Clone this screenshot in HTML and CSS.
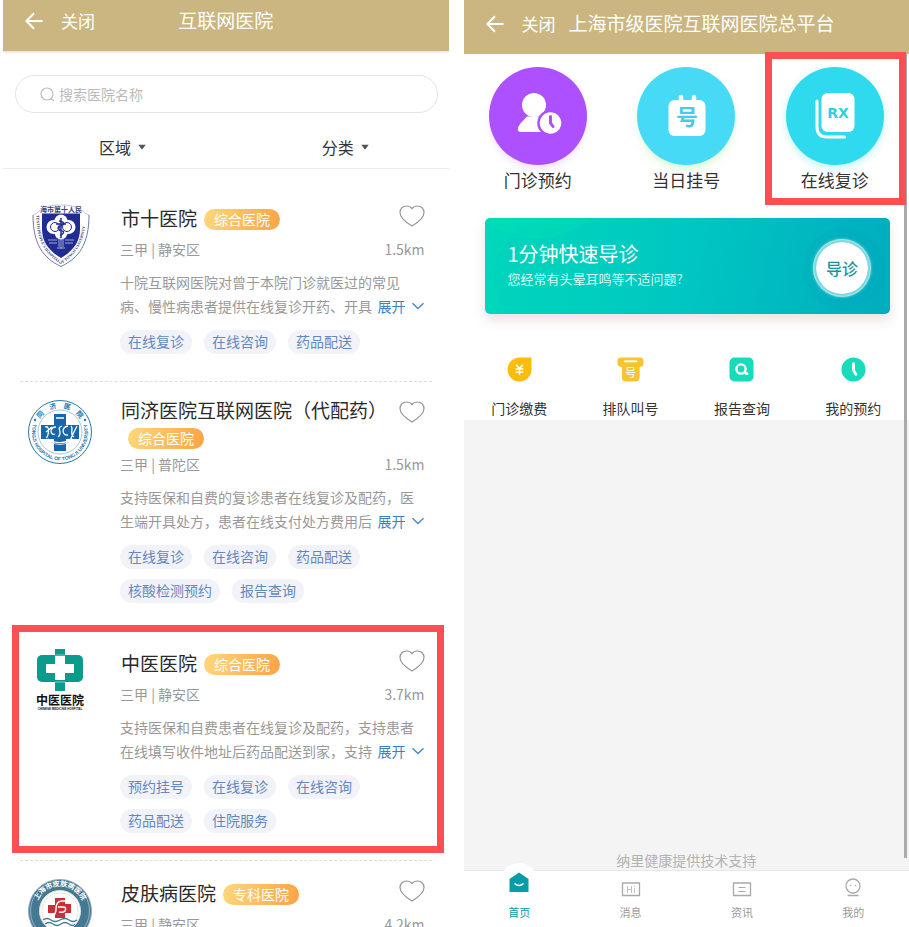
FILE: index.html
```html
<!DOCTYPE html>
<html lang="zh-CN">
<head>
    <meta charset="UTF-8" />
    <meta name="viewport" content="width=device-width, initial-scale=1" />
    <title>互联网医院</title>
    <link rel="stylesheet" href="styles.css">
</head>
<body>
<!-- shared icons -->
<svg class="defs" aria-hidden="true">
    <symbol id="i-back" viewBox="0 0 18 18"><path d="M17.5 9H1.5M9 1.2 1.3 9 9 16.8" fill="none" stroke="#fff" stroke-width="2"/></symbol>
    <symbol id="i-heart" viewBox="0 0 26 22"><path d="M13 21C10.500 19.500 1 13.500 1 7.500C1 3.500 4 1 7.200 1C9.800 1 12 2.200 13 3.600C14 2.200 16.200 1 18.800 1C22 1 25 3.500 25 7.500C25 13.500 15.500 19.500 13 21Z" fill="none" stroke="#979797" stroke-width="1.200"/></symbol>
    <symbol id="i-down" viewBox="0 0 14 8"><path d="M1.500 1.200 7 6.500 12.500 1.200" fill="none" stroke="#4a88cc" stroke-width="1.400"/></symbol>
    <symbol id="i-caret" viewBox="0 0 8 6"><path d="M.3.800H7.700L4.600 5Q4 5.600 3.400 5Z" fill="#555"/></symbol>
</svg>

<div class="screens">
    <main class="screen">
        <header class="bar">
            <div class="bar-left">
                <button type="button" aria-label="返回"><svg width="18" height="18"><use href="#i-back"/></svg></button>
                <button type="button">关闭</button>
            </div>
            <h1>互联网医院</h1>
        </header>

        <label class="search">
            <svg width="15" height="15" viewBox="0 0 15 15" fill="none" stroke="#bdbdbd" stroke-width="1.200"><circle cx="7" cy="7" r="6"/><path d="M11 11.500 14 14"/></svg>
            <input type="search" aria-label="搜索医院名称" placeholder="搜索医院名称" />
        </label>

        <div class="filters">
            <label><select aria-label="区域"><option>区域</option></select><svg width="8" height="6"><use href="#i-caret"/></svg></label>
            <label><select aria-label="分类"><option>分类</option></select><svg width="8" height="6"><use href="#i-caret"/></svg></label>
        </div>

        <section class="list">
            <article class="hospital">
                <svg class="logo" viewBox="0 0 64 64" role="img" aria-label="市十医院">
                    <path id="shield-edge" d="M8.500 11C8 36 17 51 33 60C49 51 58 36 57.500 11" fill="none"/>
                    <path d="M5 11C5 40 15 54 33 62.500C51 54 61 40 61 11" fill="none" stroke="#4b5590" stroke-width=".800"/>
                    <path d="M5 11Q9 10 11 7C19 2 24 1 33 1S47 2 55 7Q57 10 61 11" fill="none" stroke="#8f96bb" stroke-width=".500"/>
                    <text x="33" y="8" text-anchor="middle" class="shield-cn">海市第十人民</text>
                    <text class="shield-en"><textPath href="#shield-edge">TENTH PEOPLE'S HOSPITAL OF TONGJI UNIVERSITY</textPath></text>
                    <path d="M14 9.500H52V25C52 38 45 47 33 54C21 47 14 38 14 25Z" fill="#202c91"/>
                    <g fill="#fff"><circle cx="33" cy="17" r="6.500"/><circle cx="33" cy="29" r="6.500"/><circle cx="25.500" cy="23" r="7"/><circle cx="40.500" cy="23" r="7"/></g>
                    <g fill="none" stroke="#202c91"><circle cx="27" cy="23" r="4.500"/><circle cx="39" cy="23" r="4.500"/></g>
                    <path d="M33 14V34M28 20H38M31 17C38 18 36 21 32 22S31 27 34 27S35 31 32 31" fill="none" stroke="#202c91" stroke-width="1.500"/>
                    <path d="M20 36H29M37 36H46M21 39H29M37 39H45M31 33V43M33 34V45M35 33V43M29 44H37" stroke="#bcc4ea" stroke-width=".800"/>
                </svg>
                <div class="info">
                    <div class="head">
                        <h2>市十医院<span class="badge">综合医院</span></h2>
                        <button type="button" aria-label="收藏"><svg width="26" height="22"><use href="#i-heart"/></svg></button>
                    </div>
                    <p class="meta"><span>三甲 | 静安区</span><span>1.5km</span></p>
                    <p class="desc">十院互联网医院对曾于本院门诊就医过的常见病、慢性病患者提供在线复诊开药、开具<button type="button">展开<svg width="14" height="8"><use href="#i-down"/></svg></button></p>
                    <ul class="tags"><li>在线复诊</li><li>在线咨询</li><li>药品配送</li></ul>
                </div>
            </article>

            <article class="hospital">
                <svg class="logo" viewBox="0 0 64 64" role="img" aria-label="同济医院">
                    <path id="tj-top" d="M8 32A24 24 0 0 1 56 32" fill="none"/>
                    <path id="tj-bottom" d="M5.300 24A28 28 0 1 0 58.700 24" fill="none"/>
                    <circle cx="32" cy="32" r="31.500" fill="#fff" stroke="#2778a8"/>
                    <circle cx="32" cy="32" r="22" fill="none" stroke="#6d9fb9" stroke-width=".600"/>
                    <text class="tj-cn"><textPath href="#tj-top" startOffset="50%" text-anchor="middle">同&#160;&#160;&#160;&#160;济&#160;&#160;&#160;&#160;医&#160;&#160;&#160;&#160;院</textPath></text>
                    <text class="tj-en"><textPath href="#tj-bottom" startOffset="50%" text-anchor="middle">TONGJI HOSPITAL OF TONGJI UNIVERSITY</textPath></text>
                    <circle cx="7" cy="20" r="1.200" fill="#2778a8"/><circle cx="57" cy="20" r="1.200" fill="#2778a8"/>
                    <path d="M26 14H38V25H51V39H38V51H26V39H13V25H26Z" fill="#1767aa"/>
                    <path d="M28 18H36M17 27C23 25 20 37 18 38M18 32L24 27M28 27C21 27 22 36 27 34M34 26C27 28 36 32 30 37M40 26C33 27 34 36 40 35M43 26C46 29 41 34 46 37M49 26L43 38M20 39C27 44 38 44 44 38" fill="none" stroke="#fff" stroke-width="1.300"/>
                    <path d="M23 42Q32 47 41 42" fill="none" stroke="#c5dced"/>
                </svg>
                <div class="info">
                    <div class="head">
                        <h2>同济医院互联网医院（代配药）<span class="badge">综合医院</span></h2>
                        <button type="button" aria-label="收藏"><svg width="26" height="22"><use href="#i-heart"/></svg></button>
                    </div>
                    <p class="meta"><span>三甲 | 普陀区</span><span>1.5km</span></p>
                    <p class="desc">支持医保和自费的复诊患者在线复诊及配药，医生端开具处方，患者在线支付处方费用后<button type="button">展开<svg width="14" height="8"><use href="#i-down"/></svg></button></p>
                    <ul class="tags"><li>在线复诊</li><li>在线咨询</li><li>药品配送</li><li>核酸检测预约</li><li>报告查询</li></ul>
                </div>
            </article>

            <article class="hospital marked">
                <svg class="logo" viewBox="0 0 64 64" role="img" aria-label="中医医院">
                    <rect x="9" y="6" width="46" height="27" rx="5" fill="#0a9b8c"/>
                    <path d="M27 7H37V15H46V24H37V31H27V24H18V15H27Z" fill="#fff"/>
                    <path d="M27 0H37V7H27ZM27 31H37V42H27Z" fill="#0a9b8c"/>
                    <path d="M27 6H37M27 33H37" stroke="#d6f0ed" stroke-width=".600"/>
                    <text x="32" y="56" text-anchor="middle" class="tcm-cn">中医医院</text>
                    <text x="32" y="61" text-anchor="middle" class="tcm-en">CHINESE MEDICINE HOSPITAL</text>
                </svg>
                <div class="info">
                    <div class="head">
                        <h2>中医医院<span class="badge">综合医院</span></h2>
                        <button type="button" aria-label="收藏"><svg width="26" height="22"><use href="#i-heart"/></svg></button>
                    </div>
                    <p class="meta"><span>三甲 | 静安区</span><span>3.7km</span></p>
                    <p class="desc">支持医保和自费患者在线复诊及配药，支持患者在线填写收件地址后药品配送到家，支持<button type="button">展开<svg width="14" height="8"><use href="#i-down"/></svg></button></p>
                    <ul class="tags"><li>预约挂号</li><li>在线复诊</li><li>在线咨询</li><li>药品配送</li><li>住院服务</li></ul>
                </div>
            </article>

            <article class="hospital">
                <svg class="logo" viewBox="0 0 64 64" role="img" aria-label="皮肤病医院">
                    <path id="skin-top" d="M8.500 36A24 24 0 1 1 55.500 36" fill="none"/>
                    <circle cx="32" cy="32" r="31.500" fill="#447991" stroke="#8eabb9"/>
                    <circle cx="32" cy="32" r="29.500" fill="none" stroke="#c9d8df" stroke-width=".600"/>
                    <circle cx="32" cy="32" r="20.500" fill="#fff" stroke="#dbe6ea"/>
                    <circle cx="32" cy="32" r="18" fill="none" stroke="#c6ba93" stroke-width=".800" stroke-dasharray="1 1"/>
                    <text class="skin-cn"><textPath href="#skin-top" startOffset="50%" text-anchor="middle">上海市皮肤病医院</textPath></text>
                    <path d="M27 19H37V25H43V34H37V39H27V34H20V26H27Z" fill="#c92f34"/>
                    <path d="M40 22H34Q28 22 28 30Q28 37 22 38M30 28H35Q39 28 37 32Q35 34 31 33" fill="none" stroke="#fff" stroke-width="1.500"/>
                    <path d="M15 41Q19 38 23 41T32 41T41 41T49 41M17 45Q21 42 25 45T33 45T41 45T47 45" fill="none" stroke="#447991" stroke-width="1.300"/>
                </svg>
                <div class="info">
                    <div class="head">
                        <h2>皮肤病医院<span class="badge">专科医院</span></h2>
                        <button type="button" aria-label="收藏"><svg width="26" height="22"><use href="#i-heart"/></svg></button>
                    </div>
                    <p class="meta"><span>三甲 | 静安区</span><span>4.2km</span></p>
                </div>
            </article>
        </section>
    </main>

    <main class="screen platform">
        <header class="bar bar-tall">
            <div class="bar-left">
                <button type="button" aria-label="返回"><svg width="18" height="18"><use href="#i-back"/></svg></button>
                <button type="button">关闭</button>
            </div>
            <h1>上海市级医院互联网医院总平台</h1>
        </header>

        <div class="content">
            <div class="scrollbar"></div>
            <nav class="services">
                <a href="#">
                    <svg class="purple" viewBox="0 0 98 98">
                        <circle cx="45" cy="38" r="12" fill="#fff"/>
                        <path d="M38 49.500H52L56 65H32Q28 65 29 61C30 57 34 54 38 49.500Z" fill="#fff"/>
                        <circle cx="61.500" cy="56" r="12" fill="#fff" stroke="#ad50ff" stroke-width="2.500"/>
                        <path d="M61.500 49.500V56L64 59.500" fill="none" stroke="#ad50ff" stroke-width="3" stroke-linecap="round"/>
                    </svg>
                    门诊预约
                </a>
                <a href="#">
                    <svg class="blue" viewBox="0 0 98 98">
                        <rect x="31.500" y="33" width="37" height="36" rx="6" fill="#fff"/>
                        <path d="M44 30V35M57 30V35" stroke="#fff" stroke-width="4.500" stroke-linecap="round"/>
                        <text x="50" y="58" text-anchor="middle" class="hao">号</text>
                    </svg>
                    当日挂号
                </a>
                <a href="#" class="marked">
                    <svg class="cyan" viewBox="0 0 98 98">
                        <rect x="35.500" y="26" width="33" height="39" rx="6" fill="#fff"/>
                        <path d="M31 34V60Q31 70 41 70H58.500" fill="none" stroke="#fff" stroke-width="3" stroke-linecap="round"/>
                        <text x="52" y="51" text-anchor="middle" class="rx">RX</text>
                    </svg>
                    在线复诊
                </a>
            </nav>

            <section class="banner">
                <div>
                    <h2>1分钟快速导诊</h2>
                    <p>您经常有头晕耳鸣等不适问题?</p>
                </div>
                <button type="button">导诊</button>
            </section>

            <nav class="quick">
                <a href="#">
                    <svg viewBox="0 0 26 26"><path d="M13 .500H25.500V13A12.500 12.500 0 1 1 13 .500Z" fill="#fbbd0c"/><path d="M9.500 8 13 12 16.500 8M13 12V18.500M9 12.500H17M9 15.500H17" fill="none" stroke="#fff" stroke-width="1.500"/></svg>
                    门诊缴费
                </a>
                <a href="#">
                    <svg viewBox="0 0 26 26"><path d="M3 .500H23Q26.500.500 26.500 4V7Q26.500 10 22.500 10.500V21Q22.500 25.500 18 25.500H8.500Q4 25.500 4 21V10.500Q-.500 10-.500 7V4Q-.500.500 3 .500Z" fill="#fac431"/><path d="M6.500 4.500H20" stroke="#fff" stroke-width="2"/><text x="13" y="21" text-anchor="middle" class="queue">号</text></svg>
                    排队叫号
                </a>
                <a href="#">
                    <svg viewBox="0 0 26 26"><rect x=".500" y=".500" width="25" height="25" rx="5" fill="#16dcbc"/><circle cx="12.500" cy="12.500" r="4.800" fill="none" stroke="#fff" stroke-width="2.500"/><path d="M16 15.500Q17 17.500 20 17.500" fill="none" stroke="#fff" stroke-width="2.500"/></svg>
                    报告查询
                </a>
                <a href="#">
                    <svg viewBox="0 0 26 26"><circle cx="13" cy="13" r="12.500" fill="#16dcbc"/><path d="M13 7V12Q13 15.500 15.500 18" fill="none" stroke="#fff" stroke-width="3" stroke-linecap="round"/></svg>
                    我的预约
                </a>
            </nav>

            <footer>纳里健康提供技术支持</footer>
        </div>

        <nav class="tabs">
            <a href="#" class="active">
                <svg viewBox="0 0 24 24"><path d="M12 1.500 21.500 8V21H2.500V8Z" fill="#079ca8"/><path d="M7.500 12.500Q12 16.500 16.500 12.500" fill="none" stroke="#fff" stroke-width="1.500"/></svg>
                首页
            </a>
            <a href="#">
                <svg viewBox="0 0 24 24"><path d="M3.500 12H20.500V24.500H3.500Z" fill="none" stroke="#a9a9a9" stroke-width="1.300"/><path d="M8.500 15V22M8.500 18.500H12.500M12.500 15V22M15.500 17V22M15.500 14.500V15.800" stroke="#bbb" stroke-width=".900"/></svg>
                消息
            </a>
            <a href="#">
                <svg viewBox="0 0 24 24"><path d="M3.500 12H20.500V24.500H3.500Z" fill="none" stroke="#a9a9a9" stroke-width="1.300"/><path d="M8.500 16.500H15.500M8.500 20.500H15.500" stroke="#aaa"/></svg>
                资讯
            </a>
            <a href="#">
                <svg viewBox="0 0 24 24"><circle cx="12" cy="15" r="7" fill="none" stroke="#a9a9a9" stroke-width="1.300"/><path d="M6.500 24.500H17.500" stroke="#a9a9a9" stroke-width="1.500"/><circle cx="9.500" cy="14.500" r=".800" fill="#aaa"/><circle cx="14.500" cy="14.500" r=".800" fill="#aaa"/></svg>
                我的
            </a>
        </nav>
    </main>
</div>
</body>
</html>
```
FILE: styles.css
```css
* {
    margin: 0;
    padding: 0;
    box-sizing: border-box;
}
body {
    background: #fff;
    color: #333;
    font-family: "Noto Sans CJK SC", sans-serif;
    font-size: 14px;
    line-height: 20px;
}
button, input, select {
    font: inherit;
    color: inherit;
    background: none;
    border: 0;
    outline: 0;
}
button {
    cursor: pointer;
    white-space: nowrap;
}
a {
    color: inherit;
    text-decoration: none;
}
svg {
    display: block;
    flex: none;
    overflow: visible;
}
.defs {
    position: absolute;
    width: 0;
    height: 0;
}

.screens {
    display: grid;
    grid-template-columns: 1fr 1fr;
    gap: 15px;
    height: 100vh;
    padding-left: 3px;
    overflow: hidden;
}
.screen {
    min-width: 0;
    overflow: hidden;
}

/* top bar */
.bar {
    display: grid;
    grid-template-columns: 1fr auto 1fr;
    align-items: center;
    flex: none;
    height: 51px;
    padding-bottom: 10px;
    background: #cbb681;
    color: #fff;
    box-shadow: 0 1px 3px rgba(160, 120, 80, 0.3);
}
.bar-tall {
    height: 54px;
    padding-bottom: 6px;
}
.bar h1 {
    padding-bottom: 2px;
    font-size: 19px;
    font-weight: normal;
    white-space: nowrap;
}
.bar-left {
    display: flex;
    align-items: center;
    gap: 18px;
    padding: 0 13px 0 22px;
    font-size: 17px;
}

/* search and filters */
.search {
    display: flex;
    align-items: center;
    gap: 4px;
    height: 38px;
    margin: 24px 11px 0 12px;
    padding: 0 24px;
    border: 1px solid #e4e4e4;
    border-radius: 19px;
}
.search input {
    flex: 1;
    min-width: 0;
}
.search input::placeholder {
    color: #bbb;
}
.filters {
    display: grid;
    grid-template-columns: 1fr 1fr;
    padding: 22px 0 9px;
    border-bottom: 1px solid #ececec;
    font-size: 16px;
}
.filters label {
    display: flex;
    align-items: center;
    justify-content: center;
    gap: 6px;
    padding-left: 16px;
}
.filters select {
    appearance: none;
    height: 24px;
}

/* hospital list */
.list {
    padding: 16px 17px 0;
}
.hospital {
    position: relative;
    display: flex;
    gap: 28px;
    padding: 0 7px 27px 8px;
}
.hospital + .hospital::before {
    content: "";
    position: absolute;
    top: 0;
    left: 0;
    right: 0;
    border-top: 1px dashed #ddd;
}
.logo {
    width: 64px;
    height: 64px;
    margin-top: 19px;
}
.info {
    flex: 1;
    min-width: 0;
    padding-top: 15px;
}
.head {
    display: flex;
    align-items: center;
    justify-content: space-between;
    min-height: 35px;
}
.head h2 {
    padding-left: 1px;
    font-size: 19px;
    font-weight: normal;
    line-height: 27px;
    color: #2a2a2a;
}
.head button {
    align-self: flex-start;
    padding-top: 5px;
}
.badge {
    display: inline-block;
    height: 21px;
    margin-left: 7px;
    padding: 0 10px;
    border-radius: 11px;
    background: linear-gradient(100deg, #fdd77c, #fba445);
    color: #fff;
    font-size: 14px;
    line-height: 20px;
    vertical-align: 1px;
}
.meta {
    display: flex;
    justify-content: space-between;
    margin-top: 4px;
    color: #999;
}
.desc {
    margin-top: 11px;
    color: #999;
    line-height: 24px;
}
.desc button {
    float: right;
    display: flex;
    align-items: center;
    gap: 5px;
    color: #3f7fc6;
}
.tags {
    display: flex;
    flex-wrap: wrap;
    gap: 10px 12px;
    margin-top: 12px;
    list-style: none;
}
.tags li {
    height: 24px;
    padding: 0 8px;
    border-radius: 12px;
    background: #f1f3f9;
    color: #6488bd;
    line-height: 23px;
}

/* red highlight frames */
.marked {
    position: relative;
}
.marked::after {
    content: "";
    position: absolute;
    border: 7px solid #fc4f53;
    pointer-events: none;
}
.hospital.marked::after {
    top: -5px;
    right: -12px;
    bottom: 7px;
    left: -8px;
}
.services .marked::after {
    top: -15px;
    right: 3px;
    bottom: -13px;
    left: 4px;
}

/* lettering in the logos */
.shield-cn {
    font-size: 7px;
    font-weight: bold;
    fill: #3a4377;
}
.shield-en {
    font-family: "Liberation Serif", serif;
    font-size: 4px;
    font-weight: bold;
    fill: #3a4377;
}
.tj-cn {
    font-size: 7px;
    font-weight: bold;
    fill: #2778a8;
}
.tj-en {
    font-family: "Liberation Sans", sans-serif;
    font-size: 5px;
    font-weight: bold;
    fill: #2778a8;
}
.tcm-cn {
    font-size: 12px;
    font-weight: bold;
    fill: #111;
}
.tcm-en {
    font-family: "Liberation Sans", sans-serif;
    font-size: 3px;
    font-weight: bold;
    fill: #111;
}
.skin-cn {
    font-size: 7px;
    font-weight: bold;
    fill: #fff;
}

/* platform screen */
.platform {
    display: flex;
    flex-direction: column;
}
.content {
    position: relative;
    flex: 1;
    display: flex;
    flex-direction: column;
    background: #fff;
}
.scrollbar {
    position: absolute;
    z-index: 1;
    top: 0;
    right: 2px;
    bottom: 12px;
    width: 3px;
    background: #aaa;
}
.services {
    display: grid;
    grid-template-columns: repeat(3, 1fr);
    padding: 13px 0 26px;
    font-size: 17px;
    line-height: 24px;
}
.services a {
    display: flex;
    flex-direction: column;
    align-items: center;
    gap: 4px;
}
.services .marked {
    z-index: 2;
}
.services svg {
    width: 98px;
    height: 98px;
    margin-bottom: -1px;
    border-radius: 50%;
}
.purple {
    background: #ad50ff;
    box-shadow: 0 5px 8px -2px rgba(173, 80, 255, 0.2);
}
.blue {
    background: #46daf6;
    box-shadow: 0 5px 8px -2px rgba(160, 240, 150, 0.5);
}
.cyan {
    background: #30daee;
    box-shadow: 0 3px 8px rgba(48, 218, 238, 0.3);
}
.hao {
    font-size: 22px;
    font-weight: bold;
    fill: #46cbee;
}
.rx {
    font-family: "DejaVu Sans", sans-serif;
    font-size: 14px;
    font-weight: bold;
    fill: #30cfe4;
}
.banner {
    display: flex;
    align-items: center;
    justify-content: space-between;
    height: 96px;
    margin: 0 19px 0 21px;
    padding: 0 19px 0 23px;
    border-radius: 5px;
    background:
        radial-gradient(circle at 359px 51px, rgba(0, 155, 185, 0.15) 41px, transparent 42px),
        radial-gradient(circle at 50px -60px, rgba(0, 225, 180, 0.4) 80px, transparent 81px),
        radial-gradient(circle at 70px 60px, rgba(0, 205, 190, 0.3) 60px, transparent 61px),
        linear-gradient(100deg, #00d9ba, #00c6c2 50%, #00adbe);
    color: #fff;
    box-shadow: 0 6px 12px rgba(150, 90, 90, 0.18);
}
.banner h2 {
    font-size: 20px;
    font-weight: normal;
    line-height: 26px;
}
.banner p {
    font-size: 13px;
    line-height: 24px;
    color: #d5f8f4;
}
.banner button {
    width: 58px;
    height: 58px;
    margin-top: 4px;
    border: 3px solid rgba(255, 255, 255, 0.5);
    border-radius: 50%;
    background: #fff;
    background-clip: padding-box;
    color: #1c9496;
    font-size: 16px;
    font-weight: 500;
    box-shadow: 0 0 3px rgba(255, 255, 255, 0.5);
}
.quick {
    display: grid;
    grid-template-columns: repeat(4, 1fr);
    padding: 43px 0 2px;
}
.quick a {
    display: flex;
    flex-direction: column;
    align-items: center;
    gap: 16px;
}
.quick svg {
    width: 25px;
    height: 25px;
}
.queue {
    font-size: 12px;
    fill: #fff;
}
.content footer {
    flex: 1;
    display: flex;
    align-items: flex-end;
    justify-content: center;
    background: #f4f4f4;
    color: #b3b3b3;
}

/* bottom tabs */
.tabs {
    position: relative;
    display: grid;
    grid-template-columns: repeat(4, 1fr);
    height: 57px;
    border-top: 1px solid #e8e8e8;
    background: #fff;
    color: #999;
    font-size: 11px;
    line-height: 16px;
}
.tabs a {
    position: relative;
    display: flex;
    flex-direction: column;
    align-items: center;
    gap: 9px;
}
.tabs svg {
    position: relative;
    width: 24px;
    height: 24px;
}
.tabs .active {
    color: #079ca8;
}
.tabs .active::before {
    content: "";
    position: absolute;
    top: -8px;
    width: 38px;
    height: 38px;
    border-radius: 50%;
    background: #fff;
}
```
